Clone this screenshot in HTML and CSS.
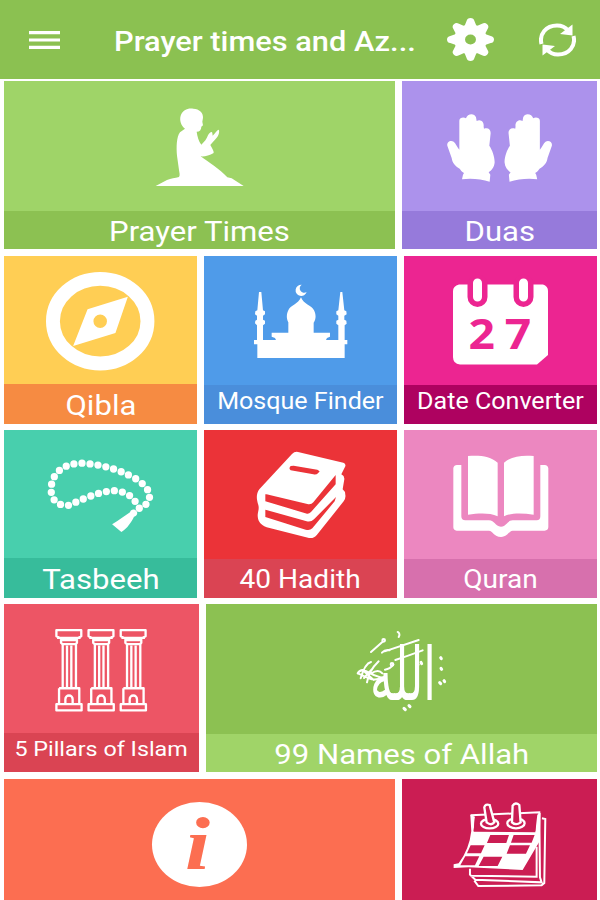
FILE: index.html
```html
<!DOCTYPE html>
<html lang="en">
<head>
    <meta charset="UTF-8">
    <meta name="viewport" content="width=device-width, initial-scale=1.0">
    <title>Prayer times and Azan</title>
    <link rel="stylesheet" href="styles.css">
</head>
<body>
    <header class="toolbar">
        <svg class="menu-icon" viewBox="0 0 31 18">
            <path d="M0 1.7h31M0 9h31M0 16.3h31"/>
        </svg>
        <h1 class="title"><span>Prayer times and Az...</span></h1>
        <svg class="gear-icon" viewBox="-21.5 -21.5 43 43" preserveAspectRatio="none">
            <defs><path id="tooth" d="M-6 -12L-3.600 -18.500Q-3 -21.500 0 -21.500Q3 -21.500 3.600 -18.500L6 -12z"/></defs>
            <circle r="10" fill="none" stroke="#fff" stroke-width="10"/>
            <use href="#tooth"/>
            <use href="#tooth" transform="rotate(45)"/>
            <use href="#tooth" transform="rotate(90)"/>
            <use href="#tooth" transform="rotate(135)"/>
            <use href="#tooth" transform="rotate(180)"/>
            <use href="#tooth" transform="rotate(225)"/>
            <use href="#tooth" transform="rotate(270)"/>
            <use href="#tooth" transform="rotate(315)"/>
        </svg>
        <svg class="refresh-icon" viewBox="0 0 37 34">
            <path class="line" d="M2.500 21C0 11 7 2.500 18 2.500c5 0 8.500 1.800 11 5M34.500 13C37 23 30 31.500 19 31.500c-5 0-8.500-1.800-11-5"/>
            <path d="M33.500 1.500v11L21 11zM3.500 32.500v-11L16 23z"/>
        </svg>
    </header>
    <main class="tiles">
        <div class="row wide-first">
            <a class="tile prayer">
                <svg class="icon" viewBox="4 81 391 130">
                    <g transform="translate(140 95) scale(.3333)">
                        <path d="M135 101C123 92 118 75 122 62C128 44 145 38 160 41C178 42 190 53 189 68L187 80L189 91L184 95C184 104 179 110 170 110C172 124 176 139 184 149C194 140 200 132 204 121C208 113 216 108 217 114L218 122C225 115 230 106 235 104C240 105 237 120 230 128C223 136 217 142 211 150C216 160 222 168 221 174C208 182 194 185 182 184C205 201 239 222 262 247L275 250L311 273H47L81 255C93 250 105 249 117 246C121 240 118 233 117 225L111 182C109 157 109 127 120 112Z"/>
                    </g>
                </svg>
                <div class="label"><span>Prayer Times</span></div>
            </a>
            <a class="tile duas">
                <svg class="icon" viewBox="402 81 195 130">
                    <defs>
                        <path id="hand" d="M88 62C88 53 101 50 108 55C111 41 133 37 138 52L140 63C152 56 163 66 161 80L162 86C173 82 182 87 182 99L178 137C186 149 194 168 194 187C193 202 184 212 176 217L181 224L179 245C154 237 121 234 96 238L99 224L102 219C95 215 92 210 89 206C76 199 67 189 65 174L52 137C50 126 61 120 71 125C77 129 82 143 88 149Z"/>
                    </defs>
                    <use href="#hand" transform="translate(430 100) scale(.3333)"/>
                    <use href="#hand" transform="translate(569.200 100) scale(-.3333 .3333)"/>
                </svg>
                <div class="label"><span>Duas</span></div>
            </a>
        </div>
        <div class="row thirds">
            <a class="tile qibla">
                <svg class="icon" viewBox="4 256 194 129">
                    <ellipse cx="100.700" cy="321.500" rx="47.500" ry="42.500" fill="none" stroke="#fff" stroke-width="14"/>
                    <path fill-rule="evenodd" d="M128.500 297L116 333.500L73.500 346.500L88 309.500ZM107.500 321.500a6.800 6.800 0 1 0 -13.600 0a6.800 6.800 0 1 0 13.600 0z"/>
                </svg>
                <div class="label"><span>Qibla</span></div>
            </a>
            <a class="tile mosque">
                <svg class="icon" viewBox="204 256 193 129">
                    <g transform="translate(240 270) scale(.3333)">
                        <path d="M52 264V223H42V210H51V166L45 160L46 152L51 149V137L45 133L46 124L52 121L57 66H64L69 121L75 124V133L69 137V149L75 152V161L69 166V210H108L105 204L95 200V188H145V157C139 148 139 132 145 121C151 105 175 103 183 82C190 103 215 105 222 121C228 132 229 147 221 158V188H270V200L261 204L258 210H295V166L289 161V152L295 149V137L289 133V124L295 121L301 66H307L313 121L319 124L320 133L313 137V149L319 152L320 161L314 166V210H322V223H314V264Z"/>
                        <path d="M185 44A17 17 0 1 0 200 66A12 12 0 1 1 185 44"/>
                    </g>
                </svg>
                <div class="label small"><span>Mosque Finder</span></div>
            </a>
            <a class="tile date">
                <svg class="icon" viewBox="404 256 193 129">
                    <path d="M459 284.500H543Q548 286 548 291V355L537 364.500H460Q453 364 453 357V291Q453 286 459 284.500Z"/>
                    <path class="ring-gap" d="M477.500 284.500V297M523.500 284.500V297"/>
                    <path class="ring" d="M477.500 283V297M523.500 283V297"/>
                    <text class="day" transform="translate(468.500 349) scale(1.100 1)" x="0 33">27</text>
                </svg>
                <div class="label small"><span>Date Converter</span></div>
            </a>
        </div>
        <div class="row thirds">
            <a class="tile tasbeeh">
                <svg class="icon" viewBox="4 430 194 129">
                    <g transform="translate(35 445) scale(.3333)">
                        <!-- the string is a line of round dots -->
                        <path class="beads" pathLength="31" d="M315 191C298 160 285 143 242 138C190 139 138 168 99 183C61 183 48 158 49 130C53 76 97 55 143 55C198 59 249 71 306 103C334 121 351 144 345 161C343 175 333 183 315 191"/>
                        <path d="M287 203C289 193 302 193 307 200C312 208 306 215 299 217C292 232 279 252 261 263L233 239C253 228 272 213 287 203Z"/>
                    </g>
                </svg>
                <div class="label"><span>Tasbeeh</span></div>
            </a>
            <a class="tile hadith">
                <svg class="icon" viewBox="204 430 193 129">
                    <g transform="translate(245 440) scale(.3333)">
                        <path fill-rule="evenodd" d="M141 42Q149 34 159 36L295 68Q303 71 301 79L289 103Q299 108 298 118L293 148Q301 154 301 164Q303 174 296 184L216 284Q207 296 192 294L65 262C45 254 38 242 38 225C39 213 43 207 40 195C34 177 33 161 43 148ZM61 163V184L186 221Q192 222 198 216L272 133V105L205 187Q198 195 187 192L74 165Q66 162 61 163ZM61 209V231L182 269Q194 273 202 265L269 184L273 171L207 238Q198 247 185 244L75 213Q66 210 61 209ZM137 78Q130 85 137 91L205 103Q214 105 219 100L224 94L217 89L146 77Z"/>
                    </g>
                </svg>
                <div class="label mid"><span>40 Hadith</span></div>
            </a>
            <a class="tile quran">
                <svg class="icon" viewBox="404 430 193 129">
                    <g transform="translate(440 445) scale(.3333)">
                        <path d="M84 33C120 30 152 34 173 53V214C147 202 115 205 84 209ZM281 33C245 30 213 34 192 53V214C218 202 250 205 281 209Z"/>
                        <path d="M40 69Q42 60 51 60H64V214Q64 226 76 226H147C164 226 165 244 183 245C200 244 202 226 218 226H290Q301 226 301 214V60H314Q324 61 325 70V247Q324 257 314 257H218C207 257 203 276 183 276C162 276 158 257 147 257H50Q40 256 40 247Z"/>
                    </g>
                </svg>
                <div class="label mid"><span>Quran</span></div>
            </a>
        </div>
        <div class="row wide-last">
            <a class="tile pillars">
                <svg class="icon" viewBox="4 604 196 130">
                    <defs>
                        <g id="pillar">
                            <path d="M35 46H110V64L97 71V84L92 88H54L49 84V71L35 64ZM37 69H108M50 76H96"/>
                            <path d="M54 88V221M67 92V219M80 92V219M94 88V221M43 221H104V269M43 221V269M35 269H111V288H35ZM62 268V254A11 11 0 0 1 84 254V268"/>
                        </g>
                    </defs>
                    <g class="outline" transform="translate(45 615) scale(.3333)">
                        <use href="#pillar"/>
                        <use href="#pillar" x="97"/>
                        <use href="#pillar" x="194"/>
                    </g>
                </svg>
                <div class="label tiny"><span>5 Pillars of Islam</span></div>
            </a>
            <a class="tile names">
                <svg class="icon" viewBox="206 604 391 130">
                    <text class="arabic" transform="translate(370 700) scale(1 1.420)" textLength="66" lengthAdjust="spacingAndGlyphs">الله</text>
                    <!-- ornaments around the name -->
                    <g class="ornament" transform="translate(345 620) scale(.3333)">
                        <path d="M78 96L112 66M119 94Q170 77 221 60M111 98Q120 88 134 91M151 120Q190 107 233 91M120 149Q135 147 145 134M158 36Q167 41 161 51"/>
                        <path d="M38 160Q48 144 66 155T109 173Q92 184 70 174T38 160M47 175Q60 130 78 126M66 187Q71 153 101 124M53 150L86 180M83 145L57 174M78 161Q100 146 112 160"/>
                        <circle cx="116" cy="61" r="4"/>
                        <circle cx="141" cy="133" r="4"/>
                        <path class="dots" d="M216 131l3 3M228 127l2 4M287 113l2 3M288 145l2 3M284 188l3 3M297 182l2 3M177 265l4 4M192 257l3 3"/>
                    </g>
                </svg>
                <div class="label"><span>99 Names of Allah</span></div>
            </a>
        </div>
        <div class="row last wide-first">
            <a class="tile info">
                <svg class="icon" viewBox="4 779 391 121">
                    <ellipse cx="199.500" cy="844.500" rx="47.500" ry="42.500"/>
                    <text class="info-i" transform="translate(185 869) scale(1.220 1)">i</text>
                </svg>
            </a>
            <a class="tile events">
                <svg class="icon" viewBox="402 779 195 121">
                    <g transform="translate(140 780) scale(.3333)">
                        <path class="sheet" d="M992 106L1198 97L1200 292L1205 307L1006 299L990 284V266M1206 115L1216 117L1213 309L1205 316L1015 318L1003 302M1190 200V290L992 287"/>
                        <path d="M991 104L1005 110L1001 155L1186 157L1192 104L1202 98L1199 184L1148 270L986 262L941 264V253L956 250Q988 208 994 153Z"/>
                        <path class="cell" d="M1005 110L1189 105L1186 153L1001 153ZM1051 165H1107L1099 189H1041ZM1121 165H1184L1175 188H1113ZM992 196H1034L1023 220H981ZM1110 196H1170L1158 221H1100ZM976 229H1018L1005 256H961ZM1031 230H1087L1073 258H1016Z"/>
                        <g class="pin">
                            <ellipse cx="1049" cy="131" rx="26" ry="14"/>
                            <path d="M1040 127L1033 82Q1036 71 1049 75L1063 127Q1054 138 1040 127Z"/>
                            <ellipse cx="1128" cy="130" rx="26" ry="15"/>
                            <path d="M1116 127L1118 77Q1127 65 1138 75L1142 127Q1128 138 1116 127Z"/>
                        </g>
                    </g>
                </svg>
            </a>
        </div>
    </main>
</body>
</html>
```
FILE: styles.css
```css
* {
    box-sizing: border-box;
}

body {
    margin: 0;
    background: #fff;
    color: #fff;
    font-family: Roboto, "Liberation Sans", sans-serif;
}

svg {
    display: block;
    fill: #fff;
    flex: none;
}

.toolbar {
    display: flex;
    align-items: center;
    height: 79px;
    padding-left: 29px;
    background: #8bc151;
}

.menu-icon {
    width: 31px;
    height: 18px;
    stroke: #fff;
    stroke-width: 3.2;
}

.title {
    width: 300px;
    margin: 5px 0 0 54px;
    font-size: 28px;
    font-weight: 500;
    line-height: 34px;
    white-space: nowrap;
}

.title span {
    display: inline-block;
    transform: scaleX(1.1);
    transform-origin: left;
}

.gear-icon {
    width: 47px;
    height: 43px;
    margin-left: 33px;
}

.refresh-icon {
    width: 37px;
    height: 34px;
    margin-left: 45px;
}

.refresh-icon .line {
    fill: none;
    stroke: #fff;
    stroke-width: 4;
}

.tiles {
    display: grid;
    gap: 6px;
    padding: 2px 3px 0 4px;
}

.row {
    display: grid;
    gap: 7px;
    height: 168px;
}

.row:first-child {
    margin-bottom: 1px;
}

.last {
    height: 121px;
    margin-top: 1px;
}

.thirds {
    grid-template-columns: 193px 193px 193px;
}

.wide-first {
    grid-template-columns: 391px 195px;
}

.wide-last {
    grid-template-columns: 195px 391px;
}

.last,
.tile {
    overflow: hidden;
}

.tile {
    display: flex;
    flex-direction: column;
}

.icon {
    width: 100%;
}

.label {
    flex: 1;
    display: flex;
    align-items: center;
    justify-content: center;
    padding-top: 3px;
    font-size: 28px;
    line-height: 30px;
    white-space: nowrap;
}

.label span {
    transform: scaleX(1.11);
}

.mid {
    padding-top: 0;
    font-size: 26px;
}

.mid span {
    transform: scaleX(1.08);
}

.small {
    padding: 0 0 5px;
    font-size: 23px;
}

.small span {
    transform: scaleX(1.09);
}

.tiny {
    padding: 0 0 7px;
    font-size: 21px;
}

.prayer { background: #9fd468; }
.prayer .label { background: #8cc152; }

.duas { background: #ac92ec; }
.duas .label { background: #967adb; }

.qibla { background: #ffce54; }
.qibla .label { background: #f68b42; }

.mosque { background: #4f9be9; }
.mosque .label { background: #4a8edb; }

.date { background: #ec2591; }
.date .label { background: #ae0260; }

.tasbeeh { background: #48cfad; }
.tasbeeh .label { background: #37bc9b; }

.hadith { background: #eb3338; }
.hadith .label { background: #da4453; }

.quran { background: #ec87c0; }
.quran .label { background: #d770ad; }

.pillars { background: #ed5565; }
.pillars .label { background: #da4453; }

.names { background: #8cc152; }
.names .label { background: #a0d468; }

.info { background: #fc6e51; }

.events { background: #cb1d53; }

.ring-gap,
.ring {
    fill: none;
    stroke: #ec2591;
    stroke-width: 20;
    stroke-linecap: round;
}

.ring {
    stroke: #fff;
    stroke-width: 9;
}

.day {
    fill: #ec2591;
    font: bold 42px "Open Sans", sans-serif;
}

.beads {
    fill: none;
    stroke: #fff;
    stroke-width: 22;
    stroke-linecap: round;
    stroke-dasharray: 0 1;
}

.outline {
    fill: none;
    stroke: #fff;
    stroke-width: 7;
    stroke-linejoin: round;
}

.arabic {
    font: 52px "DejaVu Sans", sans-serif;
}

.ornament {
    fill: none;
    stroke: #fff;
    stroke-width: 6;
    stroke-linecap: round;
}

.dots {
    stroke-width: 9;
}

.info-i {
    fill: #fc6e51;
    font: italic bold 74px "Liberation Serif", serif;
}

.sheet {
    fill: none;
    stroke: #fff;
    stroke-width: 6;
}

.cell {
    fill: #cb1d53;
}

.pin {
    fill: #cb1d53;
    stroke: #fff;
    stroke-width: 7;
}
```
